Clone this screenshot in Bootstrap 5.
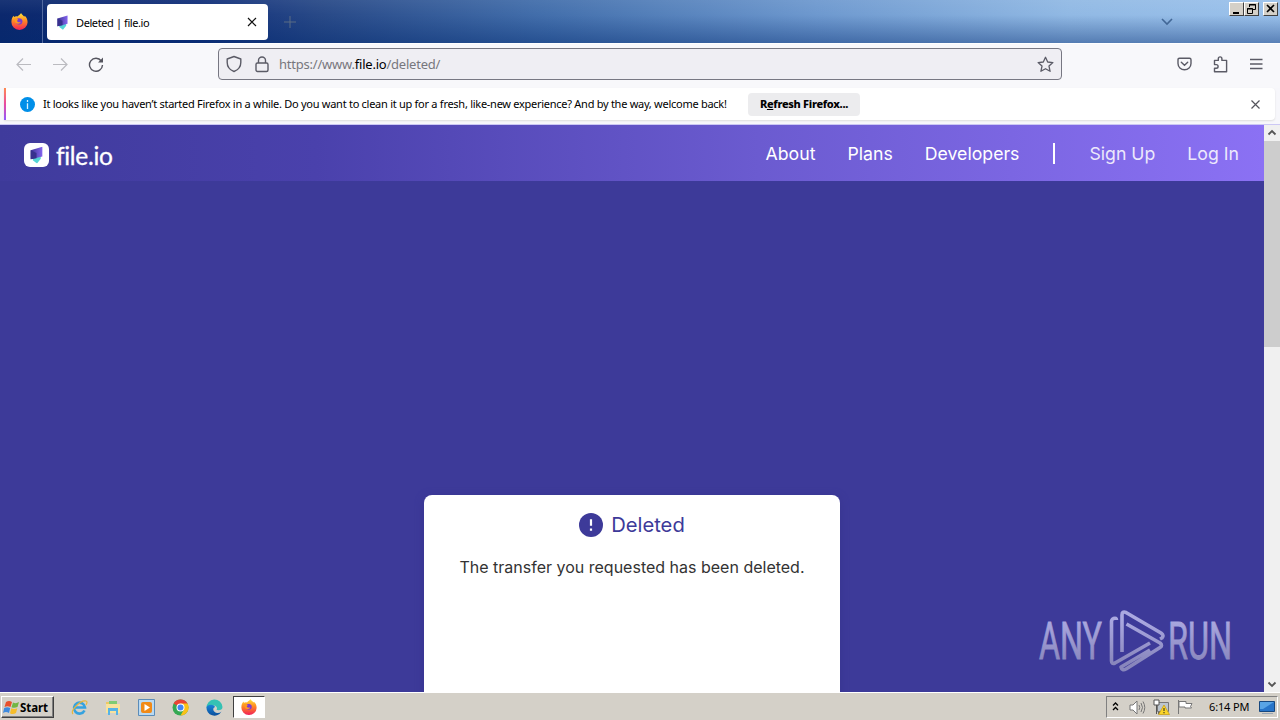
<!DOCTYPE html>
<html lang="en">
<head>
<meta charset="utf-8">
<title>Deleted | file.io</title>
<meta name="viewport" content="width=device-width, initial-scale=1">
<link href="https://cdn.jsdelivr.net/npm/bootstrap@5.3.0/dist/css/bootstrap.min.css" rel="stylesheet">
<style>
body{width:1280px;height:720px;overflow:hidden;font:11px/14px "Noto Sans",sans-serif;color:#000;background:#f7f7fb}
svg{display:block;flex:none}
.t{white-space:nowrap}
.titlebar{height:43px;background:linear-gradient(rgba(255,255,255,.06),rgba(255,255,255,0) 35%,rgba(0,40,110,.42)),linear-gradient(90deg,#0b286d 0,#12307a 200px,#284987 320px,#426eab 540px,#6e99cf 820px,#91b9e4 1070px,#9ac1eb)}
.fxbtn{width:43px;height:43px;border-right:1px solid #526aa0}
.tab{width:221px;height:36px;margin:4px 0 0 4px;border-radius:4px;background:#fff;padding:0 11px 0 10px}
.toolbar{height:45px;background:#f8f8fb;border-top:1px solid #fff}
.urlbar{width:844px;height:32px;margin-left:114px;border:1px solid #777782;border-radius:4px;background:#efeef3;font-size:13px;color:#77777d;padding:0 7px}
.notice{height:32px;margin:0 4px;background:#fff;width:1271px;box-shadow:0 1px 2px #ddd;border-radius:0 4px 4px 0}
.stripe{width:2px;height:32px;background:linear-gradient(#ff8a50,#e94aa0 50%,#9059ff)}
.refresh{width:112px;height:23px;border-radius:4px;background:#ececee;font-weight:800}
.capbtn{width:15px;height:14px;background:#d4d0c8;border:1px solid;border-color:#fff #404040 #404040 #fff}
.caps{position:absolute;right:2px;top:2px}
.page{height:567px;width:1264px;background:#3d3a99;overflow:hidden}
.site{height:56px;background:linear-gradient(90deg,#3f3b9c,#4a41ac 25%,#6b5bd0 60%,#8b71f4);color:#fff;font:17.7px/24px Inter,sans-serif}
.brandname{font:24.5px/28px Lato,sans-serif}
.panel{width:416px;height:210px;margin:314px auto 0;border-radius:8px;background:#fff;font-family:Inter,sans-serif;box-shadow:0 2px 8px #38358f}
.panel h1{font-size:20.200px;line-height:24px;color:#3d3a99;font-weight:400}
.panel p{font-size:16px;line-height:24px;color:#333}
.scroller{width:16px;height:567px;background:#f0f0f0}
.thumb{height:206px;background:#cdcdcd}
.taskbar{height:28px;background:#d4d0c8;border-top:1px solid #fff}
.start{width:53px;height:22px;margin:3px 0 0 1px;border:1px solid;border-color:#fff #404040 #404040 #fff;box-shadow:inset -1px -1px #808080;font:bold 11.500px "Noto Sans",sans-serif}
.task{width:32px;height:22px;background:#fff;border:1px solid;border-color:#404040 #fff #fff #404040}
.tray{width:172px;height:22px;border:1px solid;border-color:#808080 #fff #fff #808080}
.mark-any{position:absolute;left:1034px;top:606px}
</style>
</head>
<body class="d-flex flex-column">
<svg width="0" height="0" class="position-absolute">
<defs>
<linearGradient id="flame" x2="0" y2="1"><stop stop-color="#ffe83a"/><stop offset=".45" stop-color="#ff8a22"/><stop offset="1" stop-color="#f22058"/></linearGradient>
<linearGradient id="leaf" x2="1" y2="0"><stop stop-color="#3a3294"/><stop offset="1" stop-color="#8465ee"/></linearGradient>
<linearGradient id="edge" x2="0" y2="1"><stop stop-color="#1784d8"/><stop offset="1" stop-color="#0c4f9c"/></linearGradient>
<symbol id="fox" viewBox="0 0 16 16"><path d="M.4 8.500C.3 5.700 1.400 3.600 2.500 2.500l.4 1.300C4 3 5.200 3 6 3.400 7 2 8.700 1.600 9.500 0c.4 1.300 2 2 3 3.500l.4-.8c1.800 1.500 2.800 3.800 2.700 6.200A7.500 7.200 0 0 1 .4 8.500z" fill="url(#flame)"/><path d="M5 6c1.500-1.600 5-1.300 5.700 1 .6 2.300-1.300 4-3.300 3.800C5 10.500 4 8.500 5 6z" fill="#7b3bd1"/><path d="M3 5.500c1.500-.8 3-.3 3.700.7L5.600 7.500c1 1.500 2.600 1.200 3.700.8-.8 2.500-4.600 2.400-5.600 0z" fill="#ff9a1f"/></symbol>
<symbol id="fio" viewBox="0 0 12 16"><path d="M2.500 10 10 9v2.500L6.500 16 2.500 13z" fill="#54d4d5"/><path d="M.5 3.500 11.500.3v9L6.500 10.600.5 12z" fill="url(#leaf)"/><path d="M.5 3.500 6 6v5L.5 12z" fill="#37318e"/></symbol>
</defs></svg>

<header class="titlebar d-flex flex-shrink-0 position-relative">
  <div class="fxbtn d-flex align-items-center justify-content-center"><svg style="margin-right:3px" width="17" height="17"><use href="#fox"/></svg></div>
  <div class="tab d-flex align-items-center">
    <svg width="11" height="15"><use href="#fio"/></svg>
    <span class="t ms-2" style="letter-spacing:-.4px;padding-top:2px">Deleted | file.io</span>
    <svg class="ms-auto" width="10" height="10" stroke="#111" stroke-width="1.200"><path d="M1 1l8 8M9 1l-8 8"/></svg>
  </div>
  <svg style="margin:16px 0 0 16px" width="12" height="12" stroke="#5a6c84"><path d="M6 0v12M0 6h12"/></svg>
  <svg style="margin:17px 0 0 865px" width="12" height="10" fill="none" stroke="#426796" stroke-width="1.600"><path d="M1 2l5 5 5-5"/></svg>
  <div class="caps d-flex">
    <div class="capbtn"><svg width="13" height="12"><path d="M3 9h6v2H3z"/></svg></div>
    <div class="capbtn"><svg width="13" height="12" fill="none" stroke="#000"><path d="M4.500 4V1.500h6v5H8M4 2h7M2.500 5.500h5v5h-5zM2 6h6"/></svg></div>
    <div class="capbtn ms-1"><svg width="13" height="12" stroke="#000" stroke-width="1.600"><path d="M3 2l7 7M10 2l-7 7"/></svg></div>
  </div>
</header>

<nav class="toolbar d-flex align-items-center flex-shrink-0 pb-1">
  <svg style="margin-left:16px" width="16" height="16" fill="none" stroke="#bbbbc0" stroke-width="1.200"><path d="M15 8.500H1.500M7 2.500l-6 6 6 6"/></svg>
  <svg style="margin-left:20px" width="16" height="16" fill="none" stroke="#bbbbc0" stroke-width="1.200"><path d="M1 8.500h13.500M9 2.500l6 6-6 6"/></svg>
  <svg style="margin-left:20px" width="16" height="16" fill="none" stroke="#55555f" stroke-width="1.400"><path d="M13.300 5A6.500 6.500 0 1 0 14.500 9"/><path d="M15 1.500v5H10z" fill="#55555f" stroke="none"/></svg>
  <div class="urlbar d-flex align-items-center">
    <svg width="16" height="18" fill="none" stroke="#5b5b66" stroke-width="1.400"><path d="M8 1.500 14.800 4v3.500c0 4-2.500 7.300-6.800 9-4.300-1.700-6.800-5-6.800-9V4z" stroke-linejoin="round"/></svg>
    <svg style="margin-left:13px" width="14" height="17" fill="none" stroke="#5b5b66" stroke-width="1.400"><rect x="1" y="7" width="12" height="8.500" rx="1.500"/><path d="M3.500 7V4.500a3.500 3.500 0 0 1 7 0V7"/></svg>
    <span class="t" style="margin-left:10px;letter-spacing:-.22px">https://www.<span class="text-black">file.io</span>/deleted/</span>
    <svg class="ms-auto" width="17" height="17" fill="none" stroke="#5b5b66" stroke-width="1.300" stroke-linejoin="round"><path d="M8.500 1.300 10.700 6l5.200.6-3.900 3.500 1.100 5.200-4.600-2.600-4.600 2.600L5 10.100 1.100 6.600 6.300 6z"/></svg>
  </div>
  <svg style="margin-left:115px" width="15" height="14" fill="none" stroke="#5b5b66" stroke-width="1.400" stroke-linecap="round"><path d="M2.500 1.200h10q1.500 0 1.500 1.500V6.500a6.500 6.200 0 0 1-13 0V2.700q0-1.500 1.500-1.500zM4.300 5.200l3.200 3 3.200-3"/></svg>
  <svg style="margin-left:21px" width="15" height="17" fill="none" stroke="#5b5b66" stroke-width="1.400" stroke-linejoin="round"><path d="M1.200 4.700H5V3a1.800 1.800 0 0 1 3.600 0v1.700H13.300V16H1.200v-3.500H3a1.800 1.800 0 0 0 0-3.600H1.200z" transform="translate(.3 -.3)"/></svg>
  <svg style="margin-left:22px" width="13" height="12" stroke="#5b5b66" stroke-width="1.300"><path d="M0 1.500h12.500M0 6h12.500M0 10.500h12.500"/></svg>
</nav>

<div class="notice d-flex align-items-center flex-shrink-0">
  <div class="stripe"></div>
  <svg style="margin-left:14px" width="15" height="15"><circle cx="7.500" cy="7.500" r="7.500" fill="#008fe8"/><path d="M7.500 3v2M7.500 6.300V12" stroke="#d8f2ff" stroke-width="1.300"/></svg>
  <span class="t d-block" style="margin-left:8px;width:705px;letter-spacing:-.27px;padding-bottom:1px">It looks like you haven’t started Firefox in a while. Do you want to clean it up for a fresh, like-new experience? And by the way, welcome back!</span>
  <div class="refresh t d-flex align-items-center justify-content-center"><span style="letter-spacing:-.3px">R<u>e</u>fresh Firefox...</span></div>
  <svg class="ms-auto" style="margin-right:15px" width="9" height="9" stroke="#55555c" stroke-width="1.200"><path d="M.5.5l8 8M8.500.5l-8 8"/></svg>
</div>
<div class="flex-shrink-0" style="height:5px;border-bottom:1px solid #ccc8f4"></div>

<div class="d-flex flex-shrink-0">
  <main class="page">
    <div class="site d-flex align-items-center">
      <svg style="margin:4px 0 0 24px" width="25" height="24"><rect width="25" height="24" rx="6" fill="#fff"/><use href="#fio" x="6" y="3.500" width="13" height="17"/></svg>
      <span class="brandname t" style="margin:5px 0 0 7px;letter-spacing:-.3px;-webkit-text-stroke:.3px #fff">file.io</span>
      <div class="d-flex align-items-center ms-auto t" style="padding:1px 25px 0 0">
        <span>About</span><span style="margin-left:32px">Plans</span><span style="margin-left:32px">Developers</span>
        <span style="width:2px;height:21px;background:#fff;margin:0 34px"></span>
        <span style="opacity:.85">Sign Up</span><span style="margin-left:32px;opacity:.85">Log In</span>
      </div>
    </div>
    <section class="panel text-center">
      <div class="d-flex justify-content-center align-items-center" style="padding-top:18px">
        <svg width="24" height="24"><circle cx="12" cy="12" r="12" fill="#3d3a99"/><path d="M12 6.300v6.500M12 15.500v2.300" stroke="#fff" stroke-width="2.200"/></svg>
        <h1 class="mb-0 ms-2 t">Deleted</h1>
      </div>
      <p class="t" style="margin:18px 0 0">The transfer you requested has been deleted.</p>
    </section>
  </main>
  <aside class="scroller d-flex flex-column align-items-center">
    <svg width="16" height="16" fill="none" stroke="#555" stroke-width="1.800"><path d="M4.500 9.500 8 6l3.500 3.500"/></svg>
    <div class="thumb w-100"></div>
    <svg class="mt-auto" width="16" height="16" fill="none" stroke="#555" stroke-width="1.800"><path d="M4.500 6.500 8 10l3.500-3.500"/></svg>
  </aside>
</div>

<footer class="taskbar d-flex flex-shrink-0">
  <div class="start d-flex align-items-center t">
    <svg style="margin-left:1px" width="17" height="17"><path d="M3 3q3-2 6 0L7.500 8q-3-1.500-6 0z" fill="#e8502c"/><path d="M10 3.500q3 1.500 6-.5L14.500 8q-3 1.500-6 .3z" fill="#72b643"/><path d="M1.200 9q3-1.500 6 0L6 14q-3-2-6 0z" fill="#3e8ade"/><path d="M8.300 9.300q3 1.500 6 0L13 14q-3 2-6 .2z" fill="#f6bd2b"/></svg>
    <span style="letter-spacing:-.1px">Start</span>
  </div>
  <svg style="margin:6px 0 0 17px" width="17" height="17" fill="none"><path d="M13.500 11.500A5.500 5.500 0 1 1 14 8.500H4" stroke="#35a2df" stroke-width="2.600"/><path d="M2 15C-1 12 9 1 15 2q2 .5 0 4" stroke="#e8b63b" stroke-width="1.200"/></svg>
  <svg style="margin:6px 0 0 17px" width="16" height="17"><path d="M1 3h6l1 2h6v9H1z" fill="#edc765"/><path d="M4 2h8v4H4z" fill="#7ecb73"/><path d="M1 5h14v9H1z" fill="#f8e29c"/><path d="M3 16V9h10v7h-2v-4H5v4z" fill="#57b3e6"/></svg>
  <svg style="margin:6px 0 0 17px" width="17" height="17"><path d="M.5.5h16v16H.5z" fill="#b9d9f2" stroke="#5b8cb9"/><rect x="3" y="3" width="11" height="11" rx="2" fill="#f18a17"/><path d="M6.500 5v7L12 8.500z" fill="#fff"/></svg>
  <svg style="margin:6px 0 0 17px" width="17" height="17"><circle cx="8.500" cy="8.500" r="8" fill="#34a853"/><path d="M8.500 8.500 1.600 4.400A8 8 0 0 1 15.500 4.500z" fill="#ea4335"/><path d="M8.500 16.500A8 8 0 0 0 15.500 4.500H8.500v4l3.500 2z" fill="#fbc116"/><circle cx="8.500" cy="8.500" r="4" fill="#fff"/><circle cx="8.500" cy="8.500" r="3" fill="#4285f4"/></svg>
  <svg style="margin:6px 0 0 17px" width="17" height="17"><path d="M.5 9A8 8 0 0 1 16.500 8c0 3-3 3.500-6 3 1-1 .8-4-2.500-4.500C4 6 1 7 .5 9z" fill="#35c1b4"/><path d="M.5 8C2 5 8 5 9 8c-3 1-2 5.500 2 6q2.500.3 4.500-1.500A8 8 0 0 1 .5 8z" fill="url(#edge)"/></svg>
  <div class="task d-flex align-items-center justify-content-center" style="margin:3px 0 0 10px"><svg width="16" height="16"><use href="#fox"/></svg></div>
  <div class="tray d-flex align-items-center ms-auto" style="margin:3px 2px 0 0">
    <svg style="margin-left:5px" width="7" height="10" fill="none" stroke="#000" stroke-width="1.300"><path d="M1 3.500 3.500 1 6 3.500M1 8 3.500 5.500 6 8"/></svg>
    <svg style="margin-left:10px" width="17" height="15" fill="none" stroke="#777"><path d="M1 5h3l4-4v13l-4-4H1z" fill="#fff"/><path d="M10 5q1.500 2.500 0 5M12 3q3 4.500 0 9M14 1.500q3.500 6 0 12"/></svg>
    <svg style="margin-left:7px" width="17" height="16"><path d="M4.500 3.500h11v9h-11z" fill="#bcc5ce" stroke="#777"/><path d="M1 1h5v5H1zM3.500 6v9" fill="#fff" stroke="#555"/><path d="M5 13h6v2H5z" fill="#666"/><path d="M11 6l5.500 9.500h-11z" fill="#fbd529" stroke="#c59a0c" stroke-width=".7"/><path d="M11 9v3M11 13v1.300" stroke="#222"/></svg>
    <svg style="margin-left:7px" width="17" height="16" fill="#fff" stroke="#777"><path d="M1.500 1v14M2 2.500h7v2h6l-1.500 3 1 1.500H8v-1H2z"/></svg>
    <span class="t" style="margin-left:15px;letter-spacing:-.15px">6:14 PM</span>
    <svg class="ms-auto" style="margin-right:2px" width="16" height="15"><path d="M.5 1.500h15v10H.5z" fill="#2875c9" stroke="#17487f"/><path d="M1 2h14L4 9H1z" fill="#59a4e5"/><path d="M3 13h11v1H3z" fill="#9ba7b4"/></svg>
  </div>
</footer>

<svg class="mark-any" width="210" height="76">
  <defs><linearGradient id="pale" x2="0" y2="72" gradientUnits="userSpaceOnUse"><stop offset=".2" stop-color="#aaa8e0"/><stop offset=".8" stop-color="#8886bc"/></linearGradient></defs>
  <g fill="url(#pale)" stroke="url(#pale)" stroke-width=".8" font-family="Roboto, sans-serif" font-size="51"><text x="5" y="53" textLength="63" lengthAdjust="spacingAndGlyphs">ANY</text><text x="134" y="53" textLength="64" lengthAdjust="spacingAndGlyphs">RUN</text></g>
  <path d="M82.500 14q0-2.500-3-1.500-2 1-2 3V55q0 3.500 3.500 2l35-20M88 46V9q0-4 4-2.500L127 27q3.500 2.500 1 5l-2 1M92.500 18 126 37q3 2.500 0 4.500L92 63q-4 2-5-2l29-17" fill="none" stroke="url(#pale)" stroke-width="3.600" stroke-linejoin="round"/>
</svg>
<script src="https://cdn.jsdelivr.net/npm/bootstrap@5.3.0/dist/js/bootstrap.bundle.min.js"></script>
</body>
</html>
